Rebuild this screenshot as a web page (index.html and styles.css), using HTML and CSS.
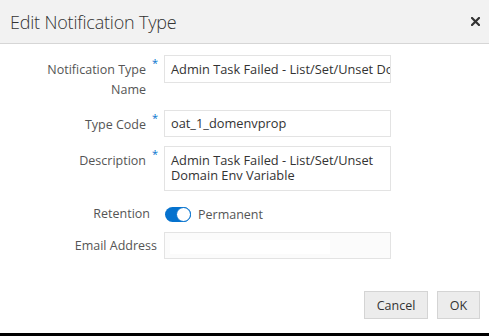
FILE: index.html
```html
<!DOCTYPE html>
<html lang="en">
<head>
  <meta charset="UTF-8">
  <title>Edit Notification Type</title>
  <link rel="stylesheet" href="styles.css">
</head>
<body>
  <div class="dialog">
    <div class="dialog-header">
      <h2>Edit Notification Type</h2>
      <svg class="close" width="9" height="9" viewBox="0 0 9 9">
        <path d="M1 1 L8 8 M8 1 L1 8" stroke="#333" stroke-width="2.2" stroke-linecap="square"/>
      </svg>
    </div>

    <div class="dialog-body">
      <div class="form-row name-row">
        <label class="field-label">Notification Type Name</label>
        <span class="req">*</span>
        <div class="input">Admin Task Failed - List/Set/Unset Domain Env Variable</div>
      </div>

      <div class="form-row">
        <label class="field-label">Type Code</label>
        <span class="req">*</span>
        <div class="input code">oat_1_domenvprop</div>
      </div>

      <div class="form-row">
        <label class="field-label">Description</label>
        <span class="req">*</span>
        <div class="input textarea">Admin Task Failed - List/Set/Unset Domain Env Variable</div>
      </div>

      <div class="form-row toggle-row">
        <label class="field-label">Retention</label>
        <div class="switch-wrap">
          <span class="switch"><span class="knob"></span></span>
          <span class="switch-text">Permanent</span>
        </div>
      </div>

      <div class="form-row email-row">
        <label class="field-label">Email Address</label>
        <div class="input email"><span class="autofill"></span></div>
      </div>
    </div>

    <div class="dialog-footer">
      <button class="btn cancel">Cancel</button>
      <button class="btn ok">OK</button>
    </div>
  </div>
</body>
</html>
```

FILE: styles.css
```css
html, body {
  margin: 0;
  height: 100%;
  overflow: hidden;
}

body {
  background: #000;
  font-family: "Open Sans", "Noto Sans", sans-serif;
  font-size: 12.5px;
  color: #333;
}

.dialog {
  background: #fff;
  height: 333px;
  display: flex;
  flex-direction: column;
  overflow: hidden;
}

.dialog-header {
  flex: none;
  background: #f2f2f2;
  border-bottom: 1px solid #d6d6d6;
  height: 44px;
  display: flex;
  align-items: center;
  justify-content: space-between;
  padding: 0 9px 0 10px;
  box-sizing: border-box;
}

h2 {
  margin: 0;
  font-size: 18px;
  font-weight: 300;
  color: #333;
  letter-spacing: -0.2px;
}

.close {
  display: block;
}

.dialog-body {
  flex: 1;
  padding-top: 11px;
}

/* rows are blocks, so their vertical margins collapse */
.form-row {
  display: flex;
  align-items: flex-start;
  margin-bottom: 9px;
}

.name-row {
  margin-bottom: 10px;
}

.field-label {
  width: 146px;
  box-sizing: border-box;
  padding-left: 44px;
  text-align: right;
  color: #555;
  line-height: 20px;
  padding-top: 5px;
}

.req {
  width: 18px;
  color: #0572ce;
  font-size: 11px;
  line-height: 12px;
  padding-left: 6px;
  box-sizing: border-box;
  padding-top: 2px;
}

.input {
  width: 227px;
  height: 28px;
  box-sizing: border-box;
  border: 1px solid #e3e3e3;
  background: #fff;
  padding: 5px 6px;
  color: #333;
  font-size: 12.8px;
  white-space: nowrap;
  overflow: hidden;
  line-height: 16px;
}

.code {
  height: 27px;
  padding-top: 4px;
}

.textarea {
  height: 45px;
  white-space: normal;
  padding-top: 6px;
  line-height: 15px;
}

.toggle-row {
  margin-top: 13px;
  margin-bottom: 8px;
  align-items: center;
}

.toggle-row .field-label,
.email-row .field-label {
  padding-top: 0;
}

.toggle-row .field-label {
  width: 150px;
  margin-right: 15px;
}

.email-row {
  align-items: center;
}

.email-row .field-label {
  width: 157px;
  margin-right: 7px;
}

.switch-wrap {
  display: flex;
  align-items: center;
}

.switch {
  width: 26px;
  height: 15px;
  border-radius: 8px;
  background: #0572ce;
  position: relative;
  display: inline-block;
}

.knob {
  position: absolute;
  right: 0;
  top: 0;
  width: 15px;
  height: 15px;
  box-sizing: border-box;
  border-radius: 50%;
  background: #fff;
  border: 1px solid #0572ce;
}

.switch-text {
  margin-left: 7px;
  color: #555;
}

.email {
  background: #fbfbfb;
  height: 27px;
  padding: 7px 5px;
}

.autofill {
  display: block;
  width: 160px;
  height: 14px;
  background: #fff;
}

.dialog-footer {
  flex: none;
  display: flex;
  justify-content: flex-end;
  gap: 9px;
  padding: 0 9px 14px 0;
}

.btn {
  font-family: inherit;
  font-size: 12.5px;
  color: #333;
  background: #ececec;
  border: 1px solid #d4d4d4;
  height: 28px;
  padding: 0;
  border-radius: 0;
}

.cancel {
  width: 64px;
}

.ok {
  width: 43px;
}
```
